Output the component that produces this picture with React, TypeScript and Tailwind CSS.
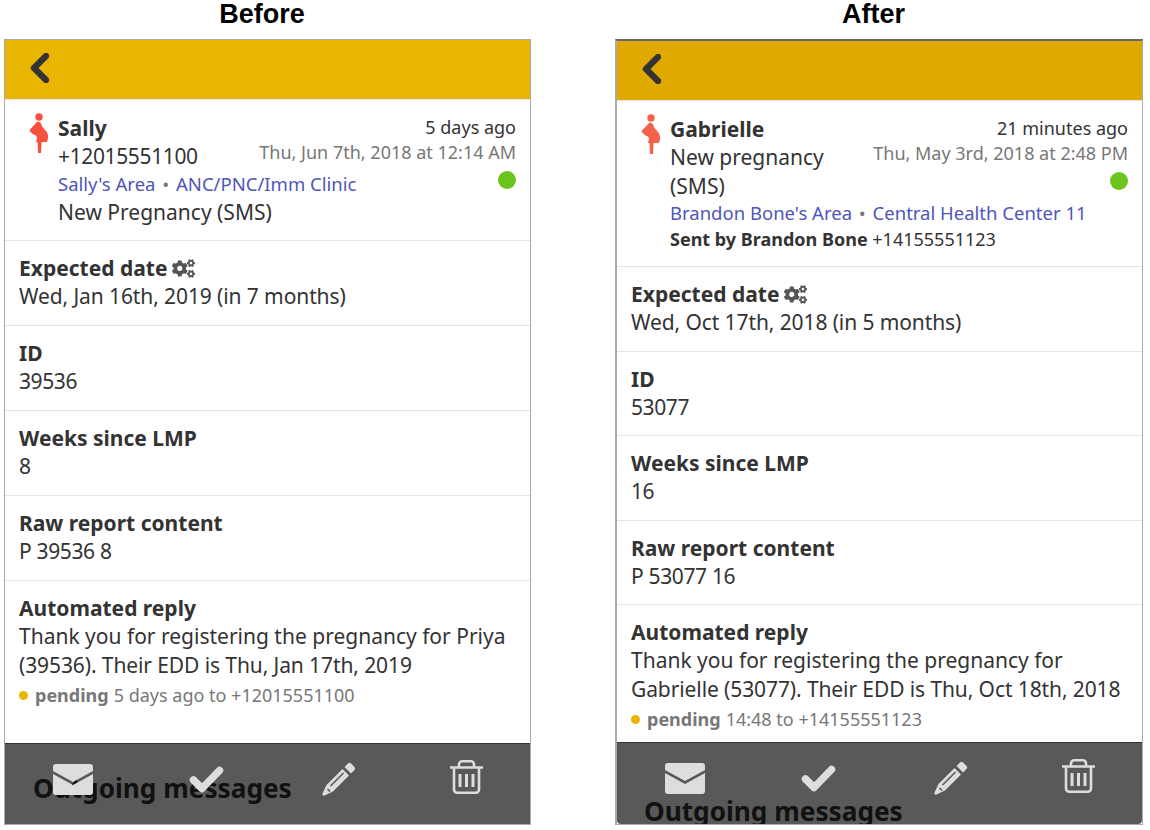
import React from "react";
import { FaCogs } from "react-icons/fa";

function Pregnant({ color }: { color: string }) {
  return (
    <svg width="20" height="40" viewBox="0 0 20 40" className="shrink-0 block" fill={color}>
      <circle cx="10" cy="4" r="3.7" />
      <path d="M8 9 C10 8.3 12 9 12.6 12 C13 14 15 15.5 17 18 C19.6 21 19.6 25 18 29 L7 29 L8 24.5 L7 22.5 L4.5 21.5 L1 18.5 C0.4 17.6 0.6 17 1.2 16.2 Z" />
      <path d="M8.4 28 H12.6 L12 40 H9 Z" />
    </svg>
  );
}

function Chevron() {
  return (
    <svg width="20" height="30" viewBox="0 0 20 30" className="block">
      <path d="M17 3 L5 15 L17 27" fill="none" stroke="#333333" strokeWidth="6.4" strokeLinejoin="round" strokeLinecap="round" />
    </svg>
  );
}

function Envelope() {
  return (
    <svg width="40" height="31" viewBox="0 0 40 31" fill="#dddddd" className="block">
      <path d="M3 0 H37 A3 3 0 0 1 40 3 V7 L20 18 L0 7 V3 A3 3 0 0 1 3 0 Z" />
      <path d="M0 10 L20 21 L40 10 V28 A3 3 0 0 1 37 31 H3 A3 3 0 0 1 0 28 Z" />
    </svg>
  );
}

function Check() {
  return (
    <svg width="35" height="27" viewBox="0 0 35 27" className="block">
      <path d="M4.5 14 L13 22.5 L30.5 4.5" fill="none" stroke="#dddddd" strokeWidth="7.5" strokeLinecap="round" strokeLinejoin="round" />
    </svg>
  );
}

function Pencil() {
  return (
    <svg width="34" height="34" viewBox="0 0 34 34" fill="#dddddd" className="block">
      <path d="M22.5 5 L26 1.5 A2.2 2.2 0 0 1 29 1.5 L32.5 5 A2.2 2.2 0 0 1 32.5 8 L29 11.5 Z" />
      <path d="M20.5 7 L27 13.5 L11 29.5 L2.5 33.5 A1.5 1.5 0 0 1 0.5 31.5 L4.5 23 Z" />
      <path d="M21.5 11 L8.5 24 M5.5 27 L8 29.5" fill="none" stroke="#5a5a5a" strokeWidth="1.6" />
    </svg>
  );
}

function Trash() {
  return (
    <svg width="33" height="34" viewBox="0 0 33 34" fill="none" stroke="#dddddd" strokeWidth="2.6" className="block">
      <path d="M0 7.5 H33" />
      <path d="M9 7 V4.5 A3.2 3.2 0 0 1 12.2 1.3 H20.8 A3.2 3.2 0 0 1 24 4.5 V7" />
      <path d="M4 7 V29.5 A3.2 3.2 0 0 0 7.2 32.7 H25.8 A3.2 3.2 0 0 0 29 29.5 V7" />
      <path d="M10 14 V27 M16.5 14 V27 M23 14 V27" strokeWidth="3" />
    </svg>
  );
}

function Field({
  label,
  gear,
  value,
  heightClass,
  valueClass,
}: {
  label: string;
  gear?: boolean;
  value: string;
  heightClass: string;
  valueClass: string;
}) {
  return (
    <div className={"border-b border-[#e4e4e4] px-[14px] pt-[13px] " + heightClass}>
      <div className="font-bold text-[21px] leading-[28px] text-[#333333] flex items-center gap-[5px]">
        {label}
        {gear && <FaCogs className="text-[#555555] w-[23px] h-[21px]" />}
      </div>
      <div className={"text-[21px] leading-[29px] text-[#333333] " + valueClass}>{value}</div>
    </div>
  );
}

type PanelProps = {
  title: string;
  amber: string;
  iconColor: string;
  borderClass: string;
  name: string;
  line: string;
  lineClass: string;
  ago: string;
  date: string;
  area: string;
  clinic: string;
  linkClass: string;
  below?: string;
  sentBy?: string;
  sentNum?: string;
  expected: string;
  id: string;
  weeks: string;
  raw: string;
  reply: string[];
  pending: string;
  panelClass: string;
  outgoingClass: string;
  barClass: string;
  heights: string[];
};

function Panel(p: PanelProps) {
  return (
    <div className={"shrink-0 " + p.panelClass}>
      <div className="h-[39px] pr-[11px] text-center font-bold text-[27px] leading-[28px] text-black [font-family:'Liberation_Sans',Arial,sans-serif]">
        {p.title}
      </div>
      <div className={"relative h-[786px] overflow-hidden bg-white border border-[#aaaaaa] " + p.borderClass}>
        <div className="h-[60px] pt-[13px] pl-[24px] border-b border-[#e6e6e6]" style={{ backgroundColor: p.amber }}>
          <Chevron />
        </div>
        <div className="border-b border-[#e4e4e4] pl-[20px] pr-[14px] pt-[14px] pb-[13px] flex">
          <div className="w-[33px] shrink-0 -mt-[1px] pl-[4px]">
            <Pregnant color={p.iconColor} />
          </div>
          <div className="flex-1 min-w-0">
            <div className="float-right text-right">
              <div className="text-[18px] leading-[26px] text-[#333333]">{p.ago}</div>
              <div className="text-[18px] leading-[25px] text-[#777777] whitespace-nowrap">{p.date}</div>
            </div>
            <div className="float-right clear-right mt-[6px] w-[18px] h-[18px] rounded-full bg-[#6cc51c]" />
            <div className="font-bold text-[21px] leading-[28px] text-[#333333]">{p.name}</div>
            <div className={"text-[21px] leading-[29px] text-[#333333] " + p.lineClass}>{p.line}</div>
            <div className={"text-[18.5px] text-[#4f55bb] whitespace-nowrap " + p.linkClass}>
              {p.area} <span className="text-[#777777] mx-[2px]">•</span> {p.clinic}
            </div>
            {p.below && <div className="text-[21px] leading-[30px] text-[#333333]">{p.below}</div>}
            {p.sentBy && (
              <div className="text-[18px] leading-[24px] mt-[2px] mb-[2px] text-[#333333]">
                <span className="font-bold">{p.sentBy}</span> {p.sentNum}
              </div>
            )}
          </div>
        </div>
        <Field label="Expected date" gear value={p.expected} heightClass={p.heights[0]} valueClass="tracking-[-0.1px]" />
        <Field label="ID" value={p.id} heightClass={p.heights[1]} valueClass="tracking-[-0.4px]" />
        <Field label="Weeks since LMP" value={p.weeks} heightClass={p.heights[2]} valueClass="tracking-[-0.4px]" />
        <Field label="Raw report content" value={p.raw} heightClass={p.heights[3]} valueClass="tracking-[-0.35px]" />
        <div className="px-[14px] pt-[13px]">
          <div className="font-bold text-[21px] leading-[28px] text-[#333333]">Automated reply</div>
          <div className="text-[21px] leading-[29px] text-[#333333] whitespace-nowrap">{p.reply[0]}</div>
          <div className="text-[21px] leading-[29px] text-[#333333] whitespace-nowrap tracking-[-0.1px]">{p.reply[1]}</div>
          <div className="flex items-center text-[18px] leading-[30px] text-[#777777] whitespace-nowrap">
            <span className="w-[9px] h-[9px] rounded-full bg-[#e8b500] mr-[7px]" />
            <span className="font-bold mr-[5px]">pending</span>
            {p.pending}
          </div>
        </div>
        <div className={"absolute font-bold text-[26.2px] leading-[36px] text-[#333333] whitespace-nowrap " + p.outgoingClass}>
          Outgoing messages
        </div>
        <div className={"absolute left-0 right-0 bottom-0 bg-black/65 border-t border-[#333333] grid grid-cols-4 " + p.barClass}>
          <div className="flex justify-center items-start pt-[20px] pl-[5px]">
            <Envelope />
          </div>
          <div className="flex justify-center items-start pt-[22px] pl-[9px]">
            <Check />
          </div>
          <div className="flex justify-center items-start pt-[18px] pl-[12px]">
            <Pencil />
          </div>
          <div className="flex justify-center items-start pt-[16px] pl-[4px]">
            <Trash />
          </div>
        </div>
      </div>
    </div>
  );
}

export default function App() {
  return (
    <div className="w-[1150px] h-[830px] overflow-hidden bg-white flex [font-family:'Noto_Sans',sans-serif]">
      <Panel
        panelClass="w-[527px] ml-[4px]"
        title="Before"
        amber="#e8b500"
        iconColor="#f8503f"
        borderClass="border-t-[#aaaaaa]"
        name="Sally"
        line="+12015551100"
        lineClass="tracking-[-0.37px]"
        ago="5 days ago"
        date="Thu, Jun 7th, 2018 at 12:14 AM"
        area="Sally's Area"
        clinic="ANC/PNC/Imm Clinic"
        linkClass="leading-[26px]"
        below="New Pregnancy (SMS)"
        expected="Wed, Jan 16th, 2019 (in 7 months)"
        id="39536"
        weeks="8"
        raw="P 39536 8"
        reply={["Thank you for registering the pregnancy for Priya", "(39536). Their EDD is Thu, Jan 17th, 2019"]}
        pending="5 days ago to +12015551100"
        outgoingClass="top-[730px] left-[28px]"
        barClass="h-[81px]"
        heights={["h-[85px]", "h-[85px]", "h-[85px]", "h-[85px]"]}
      />
      <Panel
        panelClass="w-[528px] ml-[84px]"
        title="After"
        amber="#dfa900"
        iconColor="#f4624a"
        borderClass="border-t-2 border-l-2 border-t-[#666666]"
        name="Gabrielle"
        line="New pregnancy (SMS)"
        lineClass=""
        ago="21 minutes ago"
        date="Thu, May 3rd, 2018 at 2:48 PM"
        area="Brandon Bone's Area"
        clinic="Central Health Center 11"
        linkClass="leading-[24px]"
        sentBy="Sent by Brandon Bone"
        sentNum="+14155551123"
        expected="Wed, Oct 17th, 2018 (in 5 months)"
        id="53077"
        weeks="16"
        raw="P 53077 16"
        reply={["Thank you for registering the pregnancy for", "Gabrielle (53077). Their EDD is Thu, Oct 18th, 2018"]}
        pending="14:48 to +14155551123"
        outgoingClass="top-[752px] left-[27px]"
        barClass="h-[82px] rounded-b-[4px]"
        heights={["h-[85px]", "h-[84px]", "h-[85px]", "h-[84px]"]}
      />
    </div>
  );
}
